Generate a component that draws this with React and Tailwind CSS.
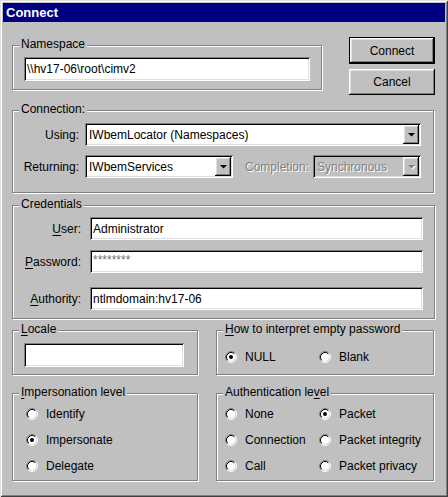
import React from "react";

const raised =
  "shadow-[inset_-1px_-1px_#000,inset_1px_1px_#fff,inset_-2px_-2px_#808080,inset_2px_2px_#dfdfdf]";
const sunken =
  "shadow-[inset_1px_1px_#808080,inset_-1px_-1px_#fff,inset_2px_2px_#000,inset_-2px_-2px_#dfdfdf]";
const dimText = "text-[#808080] [text-shadow:1px_1px_#fff]";

const Group = ({ label, className = "", children }) => (
  <div
    className={`relative border border-[#808080] shadow-[inset_1px_1px_#fff,1px_1px_#fff] ${className}`}
  >
    <span className="absolute top-[-9px] left-[6px] bg-[#c0c0c0] px-[2px] leading-[14px] whitespace-nowrap">
      {label}
    </span>
    {children}
  </div>
);

const U = ({ children }) => <span className="underline underline-offset-2">{children}</span>;

const Field = ({ className = "", children }) => (
  <div className={`flex items-center bg-white pl-[3px] ${sunken} ${className}`}>{children}</div>
);

const Arrow = ({ disabled }) => (
  <svg width="7" height="4" viewBox="0 0 7 4" className="overflow-visible">
    {disabled && <path d="M1 1h7L4.5 4.5z" fill="#fff" />}
    <path d="M0 0h7L3.5 3.5z" fill={disabled ? "#808080" : "#000"} />
  </svg>
);

const Combo = ({ value, disabled, className = "" }) => (
  <div
    className={`flex items-stretch p-[2px] ${disabled ? "bg-[#c0c0c0]" : "bg-white"} ${sunken} ${className}`}
  >
    <div className={`flex flex-1 items-center pl-[2px] ${disabled ? dimText : ""}`}>{value}</div>
    <div className={`flex w-[16px] items-center justify-center bg-[#c0c0c0] ${raised}`}>
      <Arrow disabled={disabled} />
    </div>
  </div>
);

const Radio = ({ checked }) => (
  <svg width="12" height="12" viewBox="0 0 12 12" className="shrink-0">
    <circle cx="6" cy="6" r="4.5" fill="#fff" />
    <path d="M2.11 9.89A5.5 5.5 0 0 1 9.89 2.11" fill="none" stroke="#808080" />
    <path d="M9.89 2.11A5.5 5.5 0 0 1 2.11 9.89" fill="none" stroke="#fff" />
    <path d="M2.82 9.18A4.5 4.5 0 0 1 9.18 2.82" fill="none" stroke="#000" />
    <path d="M9.18 2.82A4.5 4.5 0 0 1 2.82 9.18" fill="none" stroke="#dfdfdf" />
    {checked && <circle cx="6" cy="6" r="2" fill="#000" />}
  </svg>
);

const Option = ({ checked, children, className = "" }) => (
  <div className={`flex h-[14px] items-center gap-[8px] ${className}`}>
    <Radio checked={checked} />
    <span className="leading-[14px]">{children}</span>
  </div>
);

const Button = ({ children, primary, className = "" }) => (
  <div className={`${primary ? "border border-black" : ""} ${className}`}>
    <div className={`flex h-full items-center justify-center bg-[#c0c0c0] ${raised}`}>{children}</div>
  </div>
);

export default function App() {
  return (
    <div className="h-[497px] w-[448px] bg-[#c0c0c0] p-[3px] font-['Liberation_Sans',Arial,sans-serif] text-[12px] text-black shadow-[inset_1px_1px_#dfdfdf,inset_-1px_-1px_#404040,inset_2px_2px_#fff,inset_-2px_-2px_#808080]">
      <div className="flex h-[19px] items-center bg-[#000080] pl-[3px] text-[13px] font-bold text-white">
        Connect
      </div>

      <div className="pl-[9px]">
        <div className="mt-[15px] flex items-start">
          <Group label="Namespace" className="mt-[8px] h-[45px] w-[310px]">
            <Field className="mt-[11px] ml-[11px] h-[24px] w-[286px]">\\hv17-06\root\cimv2</Field>
          </Group>
          <div className="ml-[27px] flex flex-col gap-[5px]">
            <Button primary className="h-[27px] w-[86px]">
              Connect
            </Button>
            <Button className="h-[26px] w-[86px]">Cancel</Button>
          </div>
        </div>

        <Group label="Connection:" className="mt-[15px] h-[83px] w-[422px]">
          <div className="mt-[12px] flex items-center">
            <span className="w-[66px] text-right">Using:</span>
            <Combo value="IWbemLocator (Namespaces)" className="ml-[6px] h-[23px] w-[336px]" />
          </div>
          <div className="mt-[9px] flex items-center">
            <span className="w-[66px] text-right">Returning:</span>
            <Combo value="IWbemServices" className="ml-[6px] h-[23px] w-[148px]" />
            <span className={`ml-[12px] w-[68px] ${dimText}`}>Completion:</span>
            <Combo value="Synchronous" disabled className="h-[23px] w-[108px]" />
          </div>
        </Group>

        <Group label="Credentials" className="mt-[12px] h-[114px] w-[423px]">
          <div className="mt-[11px] flex items-center">
            <span className="w-[68px] text-right">
              <U>U</U>ser:
            </span>
            <Field className="ml-[9px] h-[23px] w-[333px]">Administrator</Field>
          </div>
          <div className="mt-[10px] flex items-center">
            <span className="w-[68px] text-right">
              <U>P</U>assword:
            </span>
            <Field className="ml-[9px] h-[23px] w-[333px] !items-start pt-[4px] text-[12px] leading-none text-[#707070]">
              ********
            </Field>
          </div>
          <div className="mt-[14px] flex items-center">
            <span className="w-[68px] text-right">
              <U>A</U>uthority:
            </span>
            <Field className="ml-[9px] h-[23px] w-[333px]">ntlmdomain:hv17-06</Field>
          </div>
        </Group>

        <div className="mt-[11px] flex">
          <Group
            label={
              <>
                <U>L</U>ocale
              </>
            }
            className="h-[45px] w-[186px]"
          >
            <Field className="mt-[12px] ml-[11px] h-[24px] w-[160px]" />
          </Group>
          <Group
            label={
              <>
                <U>H</U>ow to interpret empty password
              </>
            }
            className="ml-[18px] h-[45px] w-[218px]"
          >
            <div className="mt-[19px] ml-[8px] flex">
              <Option checked className="w-[94px]">
                NULL
              </Option>
              <Option>Blank</Option>
            </div>
          </Group>
        </div>

        <div className="mt-[18px] flex">
          <Group
            label={
              <>
                <U>I</U>mpersonation level
              </>
            }
            className="h-[88px] w-[186px]"
          >
            <div className="mt-[13px] ml-[13px] flex flex-col gap-[12px]">
              <Option>Identify</Option>
              <Option checked>Impersonate</Option>
              <Option>Delegate</Option>
            </div>
          </Group>
          <Group
            label={
              <>
                Authentication le<U>v</U>el
              </>
            }
            className="ml-[18px] h-[88px] w-[218px]"
          >
            <div className="mt-[13px] ml-[8px] grid grid-cols-[94px_1fr] gap-y-[12px]">
              <Option>None</Option>
              <Option checked>Packet</Option>
              <Option>Connection</Option>
              <Option>Packet integrity</Option>
              <Option>Call</Option>
              <Option>Packet privacy</Option>
            </div>
          </Group>
        </div>
      </div>
    </div>
  );
}
